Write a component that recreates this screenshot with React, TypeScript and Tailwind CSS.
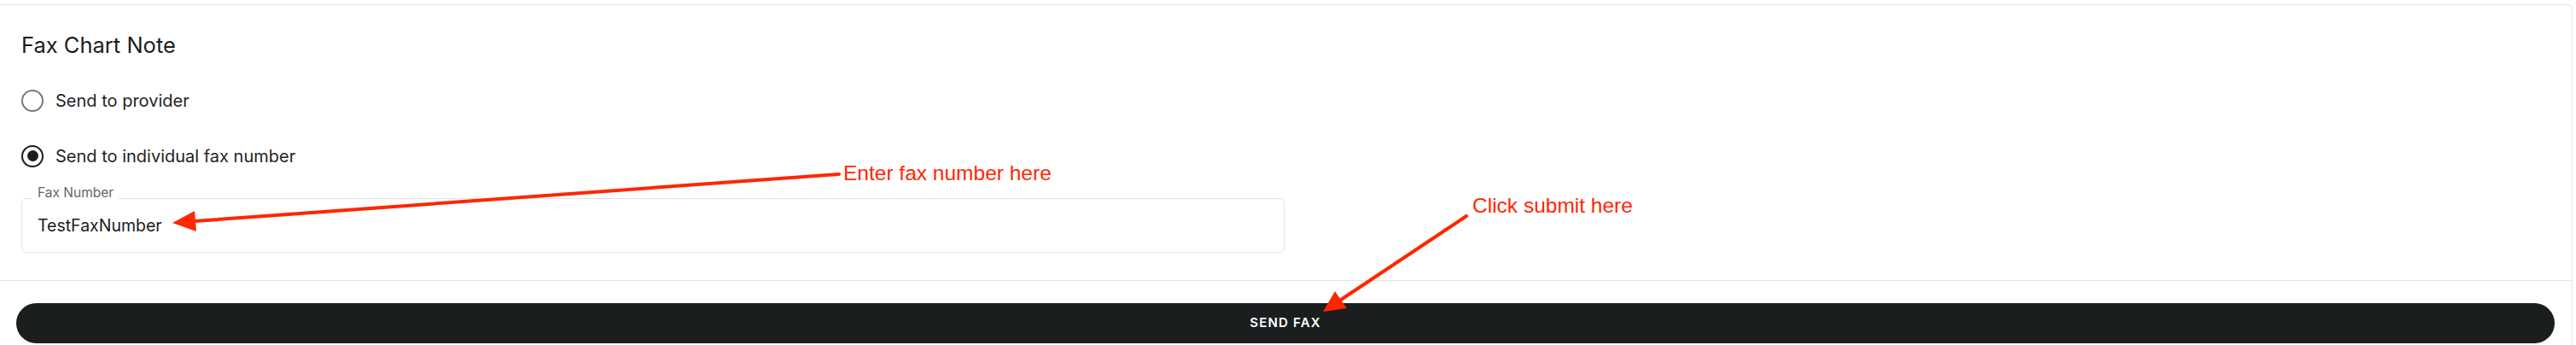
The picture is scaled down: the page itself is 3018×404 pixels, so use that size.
import { useState } from 'react';

const Radio = ({
    label,
    checked,
    onSelect,
}: {
    label: string;
    checked: boolean;
    onSelect: () => void;
}) => {
    return (
        <label
            className="flex h-[65px] cursor-pointer items-center gap-[14px]"
            onClick={onSelect}
        >
            {checked ? (
                <span className="flex h-[26px] w-[26px] items-center justify-center rounded-full border-[2.5px] border-[#1b1d1e]">
                    <span className="h-[13px] w-[13px] rounded-full bg-[#1b1d1e]" />
                </span>
            ) : (
                <span className="h-[26px] w-[26px] rounded-full border-[2.5px] border-[#7a7a7a]" />
            )}
            <span className="text-[20px] leading-[28px] text-[#1f1f1f]">
                {label}
            </span>
        </label>
    );
};

const Annotations = () => {
    return (
        <>
            <svg
                className="pointer-events-none absolute top-0 left-0"
                width="3018"
                height="404"
                viewBox="0 0 3018 404"
            >
                <line
                    x1="983"
                    y1="204"
                    x2="228"
                    y2="259"
                    stroke="#ff2600"
                    strokeWidth="4"
                    strokeLinecap="round"
                />
                <polygon points="202,261 230,271 228,247" fill="#ff2600" />
                <line
                    x1="1718"
                    y1="253"
                    x2="1571"
                    y2="351"
                    stroke="#ff2600"
                    strokeWidth="4"
                    strokeLinecap="round"
                />
                <polygon points="1550,365 1578,361 1564,341" fill="#ff2600" />
            </svg>
            <div className="pointer-events-none absolute top-[191px] left-[988px] font-['Liberation_Sans',Arial,sans-serif] text-[24.5px] leading-[24px] whitespace-nowrap text-[#ff2600]">
                Enter fax number here
            </div>
            <div className="pointer-events-none absolute top-[229px] left-[1725px] font-['Liberation_Sans',Arial,sans-serif] text-[24.5px] leading-[24px] whitespace-nowrap text-[#ff2600]">
                Click submit here
            </div>
        </>
    );
};

export default function App() {
    const [target, setTarget] = useState<'provider' | 'individual'>(
        'individual',
    );
    const [faxNumber, setFaxNumber] = useState('TestFaxNumber');

    return (
        <div className="relative h-[404px] w-[3018px] overflow-hidden bg-white font-['Inter',sans-serif]">
            <div className="pt-[5px] pr-[4px]">
                <div className="flex h-[399px] flex-col rounded-tr-[6px] border-t border-r border-[#e3e3e3]">
                    <div className="border-b border-[#e3e3e3] pt-[31px] pb-[32px] pl-[25px]">
                        <h2 className="text-[25.5px] leading-[32px] font-normal text-[#1c1c1c]">
                            Fax Chart Note
                        </h2>

                        <div className="mt-[16px] flex flex-col">
                            <Radio
                                label="Send to provider"
                                checked={target === 'provider'}
                                onSelect={() => setTarget('provider')}
                            />
                            <Radio
                                label="Send to individual fax number"
                                checked={target === 'individual'}
                                onSelect={() => setTarget('individual')}
                            />
                        </div>

                        <div className="relative mt-[17px] flex h-[64px] w-[1480px] items-center rounded-[6px] border border-[#e2e2e2] pl-[18px]">
                            <span className="absolute top-[-15px] left-[12px] bg-white px-[6px] text-[15.5px] leading-[16px] text-[#666666]">
                                Fax Number
                            </span>
                            <input
                                className="w-full bg-transparent text-[19.5px] leading-[24px] text-[#1c1c1c] outline-none"
                                value={faxNumber}
                                onChange={(e) => setFaxNumber(e.target.value)}
                            />
                        </div>
                    </div>

                    <div className="pt-[26px] pr-[20px] pl-[19px]">
                        <button className="flex h-[47px] w-full items-center justify-center rounded-full bg-[#1b1e1f] text-[15px] font-semibold tracking-[0.08em] text-white">
                            SEND FAX
                        </button>
                    </div>
                </div>
            </div>

            <Annotations />
        </div>
    );
}
